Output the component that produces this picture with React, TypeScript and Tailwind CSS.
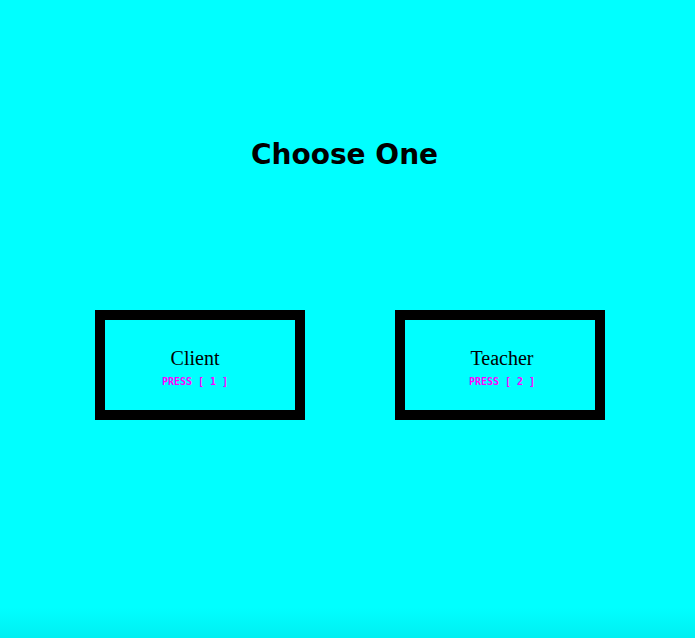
export default function App() {
  return (
    <div className="w-[695px] h-[638px] bg-[#00ffff] relative overflow-hidden">
      <div className="absolute left-0 right-0 bottom-0 h-[30px] bg-gradient-to-b from-[#00ffff] to-[#00f0f2]" />
      <div className="relative flex flex-col">
        <h1 className="pt-[138px] pl-[251px] text-[28px] leading-[34px] font-bold text-black" style={{ fontFamily: '"DejaVu Sans", sans-serif' }}>
          Choose One
        </h1>
        <div className="flex gap-[90px] pl-[95px] mt-[138px]">
          <div className="w-[210px] h-[110px] border-[10px] border-black flex flex-col items-center pt-[26px] pr-[10px]">
            <div className="text-[20px] leading-[24px] text-black" style={{ fontFamily: '"Liberation Serif", serif' }}>Client</div>
            <div className="text-[10px] leading-[14px] font-bold text-[#ff00ff] mt-[5px] whitespace-pre" style={{ fontFamily: '"DejaVu Sans Mono", monospace' }}>PRESS [ 1 ]</div>
          </div>
          <div className="w-[210px] h-[110px] border-[10px] border-black flex flex-col items-center pt-[26px] pl-[4px]">
            <div className="text-[20px] leading-[24px] text-black" style={{ fontFamily: '"Liberation Serif", serif' }}>Teacher</div>
            <div className="text-[10px] leading-[14px] font-bold text-[#ff00ff] mt-[5px] whitespace-pre" style={{ fontFamily: '"DejaVu Sans Mono", monospace' }}>PRESS [ 2 ]</div>
          </div>
        </div>
      </div>
    </div>
  );
}
